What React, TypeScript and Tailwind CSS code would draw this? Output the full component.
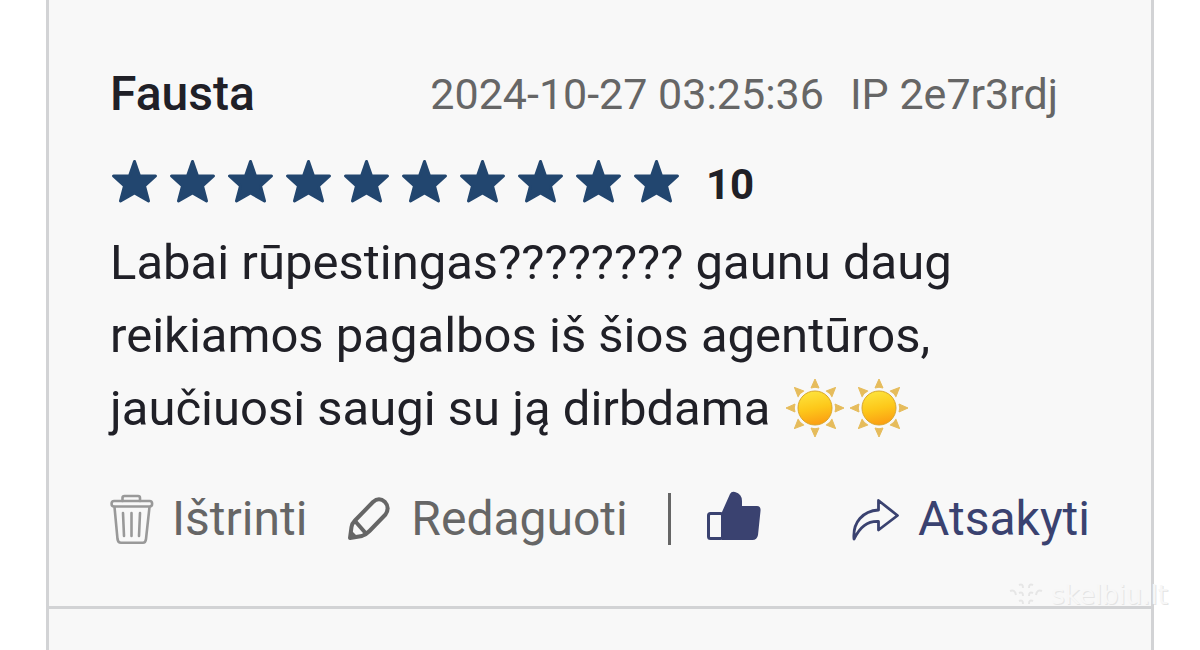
import React from 'react';

const STAR_COUNT = 10;

const StarIcon = () => (
  <svg width="48" height="48" viewBox="0 0 48 48" fill="currentColor" stroke="currentColor" strokeWidth="3" strokeLinejoin="round" aria-hidden="true">
    <path d="M24.500 3.500L29.500 18H45.500L34.500 28L38.500 43L24.500 35L10.500 43L14.500 28L3.500 18H19.500Z" />
  </svg>
);

const TrashIcon = () => (
  <svg width="44" height="52" viewBox="0 0 44 52" fill="none" stroke="#999" strokeWidth="2.6" strokeLinecap="round" strokeLinejoin="round" aria-hidden="true">
    <rect x="1.600" y="8" width="40.500" height="5.500" rx="2.500" />
    <path d="M12.500 8V5Q12.500 3 14.500 3H28Q30 3 30 5V8" />
    <path d="M4.500 14L7.500 46Q8 49.800 11 49.800H33Q35.500 49.800 36 46L39.500 14" />
    <path d="M13 20L14 43M21.500 20V43M30 20L29 43" />
  </svg>
);

const PencilIcon = () => (
  <svg width="44" height="46" viewBox="0 0 44 46" fill="none" stroke="currentColor" strokeWidth="4" strokeLinejoin="round" aria-hidden="true">
    <path d="M3 42L4.500 31Q5 27.500 8 24.500L26 6Q32 0.500 38 6Q43 11.500 38.500 18.500L22.500 35Q19 38.500 15 40Z" />
    <path d="M8 25L19 37.500" />
    <path d="M4 34L11 41L3 42Z" fill="currentColor" stroke="none" />
  </svg>
);

const ThumbIcon = () => (
  <svg width="54" height="50" viewBox="0 0 54 50" aria-hidden="true">
    <path d="M15 21L23 3Q24.500 0 28 1Q35 3 35 10V15H50Q54 15 53.500 20L51 44Q50 49 45.500 49H15Z" fill="currentColor" />
    <rect x="1.500" y="22.500" width="14" height="25" rx="2" fill="#f8f8f8" stroke="currentColor" strokeWidth="3" />
  </svg>
);

const ShareIcon = () => (
  <svg width="48" height="44" viewBox="0 0 48 44" fill="none" stroke="currentColor" strokeWidth="2.8" strokeLinejoin="round" aria-hidden="true">
    <path d="M2 42C0.500 25 11 14 26.500 13V3.500L45.500 18.500L26.500 33V24.500C15 24 8 30 2 42Z" />
  </svg>
);

const SunIcon = () => (
  <svg width="64" height="60" viewBox="-32 -30 64 60" aria-hidden="true">
    <defs>
      <linearGradient id="sun" x1="0.4" y1="0" x2="0.6" y2="1">
        <stop offset="0" stopColor="#fde33c" />
        <stop offset="0.5" stopColor="#fdc81a" />
        <stop offset="1" stopColor="#fb9c12" />
      </linearGradient>
    </defs>
    {[0, 45, 90, 135, 180, 225, 270, 315].map((angle) => (
      <path key={angle} d="M0 -29L4 -20Q0 -21.500 -4 -20Z" fill="#e6bc5c" stroke="#e6bc5c" strokeLinejoin="round" transform={`rotate(${angle})`} />
    ))}
    <circle r="17" fill="url(#sun)" stroke="#d9a72c" />
  </svg>
);

const Watermark = () => (
  <div className="absolute right-8 bottom-[42px] flex items-center gap-2 text-[#f7f7f7] [text-shadow:1px_1px_0_#e4e4e4]">
    <svg width="34" height="26" viewBox="0 0 34 26" fill="none" stroke="#e6e6e6" strokeWidth="2" aria-hidden="true">
      <path d="M1 9Q6 7 7 13M33 9Q28 7 27 13M10 3Q14 1 14 6M24 3Q20 1 20 6M10 11Q14 9 14 14M24 11Q20 9 20 14M10 19Q14 17 14 22M24 19Q20 17 20 22" />
    </svg>
    <span className="font-['DejaVu_Sans',sans-serif] text-[26px] leading-none">skelbiu.lt</span>
  </div>
);

export default function App() {
  return (
    <main className="relative flex min-h-screen flex-col overflow-hidden bg-white px-[46px] font-[Roboto,sans-serif]">
      <article className="border-x-3 border-b-3 border-[#d2d3d5] bg-[#f8f8f8] px-[61px] pt-16 pb-[59px]">
        <header className="flex items-center gap-[26px] pr-8 text-[43px] leading-[60px] text-[#666]">
          <h2 className="mr-auto text-[48px] font-medium text-[#202027]">Fausta</h2>
          <time dateTime="2024-10-27T03:25:36">2024-10-27 03:25:36</time>
          <span>IP 2e7r3rdj</span>
        </header>

        <div className="mt-[30px] flex h-14 items-center gap-[26px]">
          <div className="flex gap-[10px] text-[#22466f]">
            {[...Array(STAR_COUNT)].map((_, i) => (
              <StarIcon key={i} />
            ))}
          </div>
          <strong className="pt-[6px] text-[42px] leading-none font-bold text-[#202027]">{STAR_COUNT}</strong>
        </div>

        <p className="mt-4 text-[49px] leading-[73px] text-[#202027]">
          Labai rūpestingas???????? gaunu daug
          <br />
          reikiamos pagalbos iš šios agentūros,
          <br />
          jaučiuosi saugi su ją dirbdama{' '}
          <span role="img" aria-label="Saulė" className="-mt-2 inline-flex align-middle">
            <SunIcon />
            <SunIcon />
          </span>
        </p>

        <footer className="mt-[46px] flex h-14 items-center text-[48px] leading-[56px] text-[#666]">
          <button type="button" className="flex items-center gap-[18px]">
            <TrashIcon />
            Ištrinti
          </button>
          <button type="button" className="ml-10 flex items-center gap-5">
            <PencilIcon />
            Redaguoti
          </button>
          <span className="ml-10 h-[52px] w-[3px] bg-[#666]" />
          <button type="button" aria-label="Patinka" className="ml-9 pb-[6px] text-[#3a4270]">
            <ThumbIcon />
          </button>
          <button type="button" className="ml-auto flex items-center gap-[18px] text-[#3a4270]">
            <ShareIcon />
            Atsakyti
          </button>
        </footer>
      </article>
      <div className="grow border-x-3 border-[#d2d3d5] bg-[#f8f8f8]" />
      <Watermark />
    </main>
  );
}
